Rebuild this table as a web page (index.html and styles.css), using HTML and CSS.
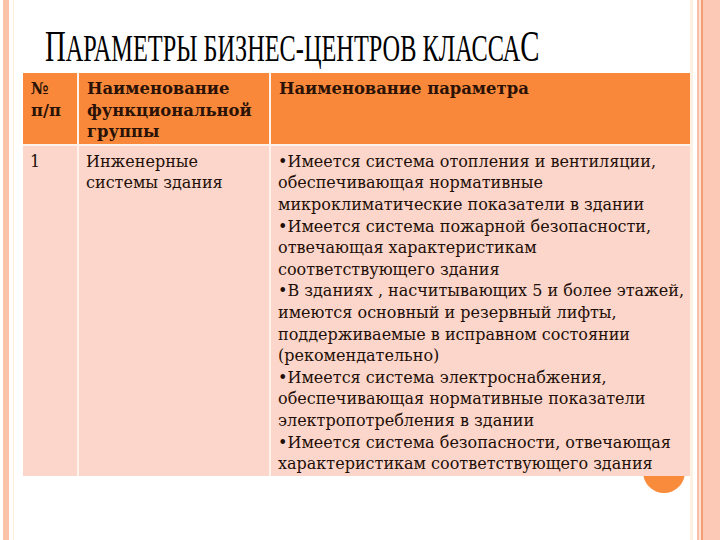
FILE: index.html
```html
<!DOCTYPE html>
<html lang="ru">
<head>
<meta charset="utf-8">
<title>Параметры бизнес-центров класса С</title>
<link rel="stylesheet" href="styles.css">
</head>
<body>
<div class="page">
  <div class="frame-left"></div>
  <main class="content">
    <h1 class="title"><span class="title-inner"><span class="big">П</span>АРАМЕТРЫ БИЗНЕС-ЦЕНТРОВ КЛАССА<span class="big">С</span></span></h1>
    <div class="table">
      <div class="cell head">№<br>п/п</div>
      <div class="cell head">Наименование функциональной группы</div>
      <div class="cell head">Наименование параметра</div>
      <div class="cell body">1</div>
      <div class="cell body">Инженерные<br>системы здания</div>
      <div class="cell body">•Имеется система отопления и вентиляции, обеспечивающая нормативные микроклиматические показатели в здании<br>•Имеется система пожарной безопасности, отвечающая характеристикам соответствующего здания<br>•В зданиях , насчитывающих 5 и более этажей, имеются основный и резервный лифты, поддерживаемые в исправном состоянии (рекомендательно)<br>•Имеется система электроснабжения, обеспечивающая нормативные показатели электропотребления в здании<br>•Имеется система безопасности, отвечающая характеристикам соответствующего здания</div>
    </div>
    <div class="dot"></div>
  </main>
  <div class="frame-right"></div>
</div>
</body>
</html>
```
FILE: styles.css
```css
html, body {
  margin: 0;
  padding: 0;
  background: #ffffff;
}
.page {
  display: flex;
  width: 720px;
  height: 540px;
  overflow: hidden;
}
.frame-left {
  width: 14px;
  flex: none;
  background: linear-gradient(to right,
    #ffffff 0, #ffffff 3px,
    #fbc3a8 3px, #fbc3a8 9px,
    #ffffff 9px, #ffffff 13px,
    #fdeedd 13px, #fdeedd 14px);
}
.frame-right {
  width: 30px;
  flex: none;
  background: linear-gradient(to right,
    #fdf1e3 0, #fdf1e3 3px,
    #ffffff 3px, #ffffff 7px,
    #f8c0a6 7px, #f8c0a6 9px,
    #fde2d5 9px, #fde2d5 11px,
    #f49e74 11px, #f49e74 13px,
    #fcc9b6 13px, #fcc9b6 30px);
}
.content {
  position: relative;
  width: 676px;
  flex: none;
  padding: 0 0 0 9px;
  box-sizing: border-box;
}
.title {
  margin: 0;
  height: 73px;
  padding-left: 22px;
  padding-top: 24px;
  box-sizing: border-box;
  font-family: "Liberation Serif", "Times New Roman", serif;
  font-weight: normal;
  font-size: 38px;
  line-height: 1;
  color: #000000;
  white-space: nowrap;
}
.title-inner {
  display: inline-block;
  transform: scaleX(0.64);
  transform-origin: left center;
}
.big {
  font-size: 45px;
}
.table {
  position: relative;
  z-index: 1;
  display: grid;
  grid-template-columns: 54px 190px 419px;
  grid-template-rows: auto auto;
  column-gap: 2px;
  row-gap: 2px;
  width: 667px;
  background: #fdf2ec;
}
.cell {
  font-family: "DejaVu Serif", "Liberation Serif", serif;
  font-size: 16px;
  line-height: 21.6px;
  padding: 5px 0 1px 8px;
  box-sizing: border-box;
}
.head {
  background: #f9883a;
  color: #2a1206;
  font-weight: bold;
  font-size: 16.4px;
}
.body {
  background: #fcd6ca;
  color: #1e0f08;
  padding: 5px 0 1px 7px;
}
.dot {
  position: absolute;
  left: 629px;
  top: 451px;
  width: 42px;
  height: 42px;
  border-radius: 50%;
  background: #f98b3c;
}
```
